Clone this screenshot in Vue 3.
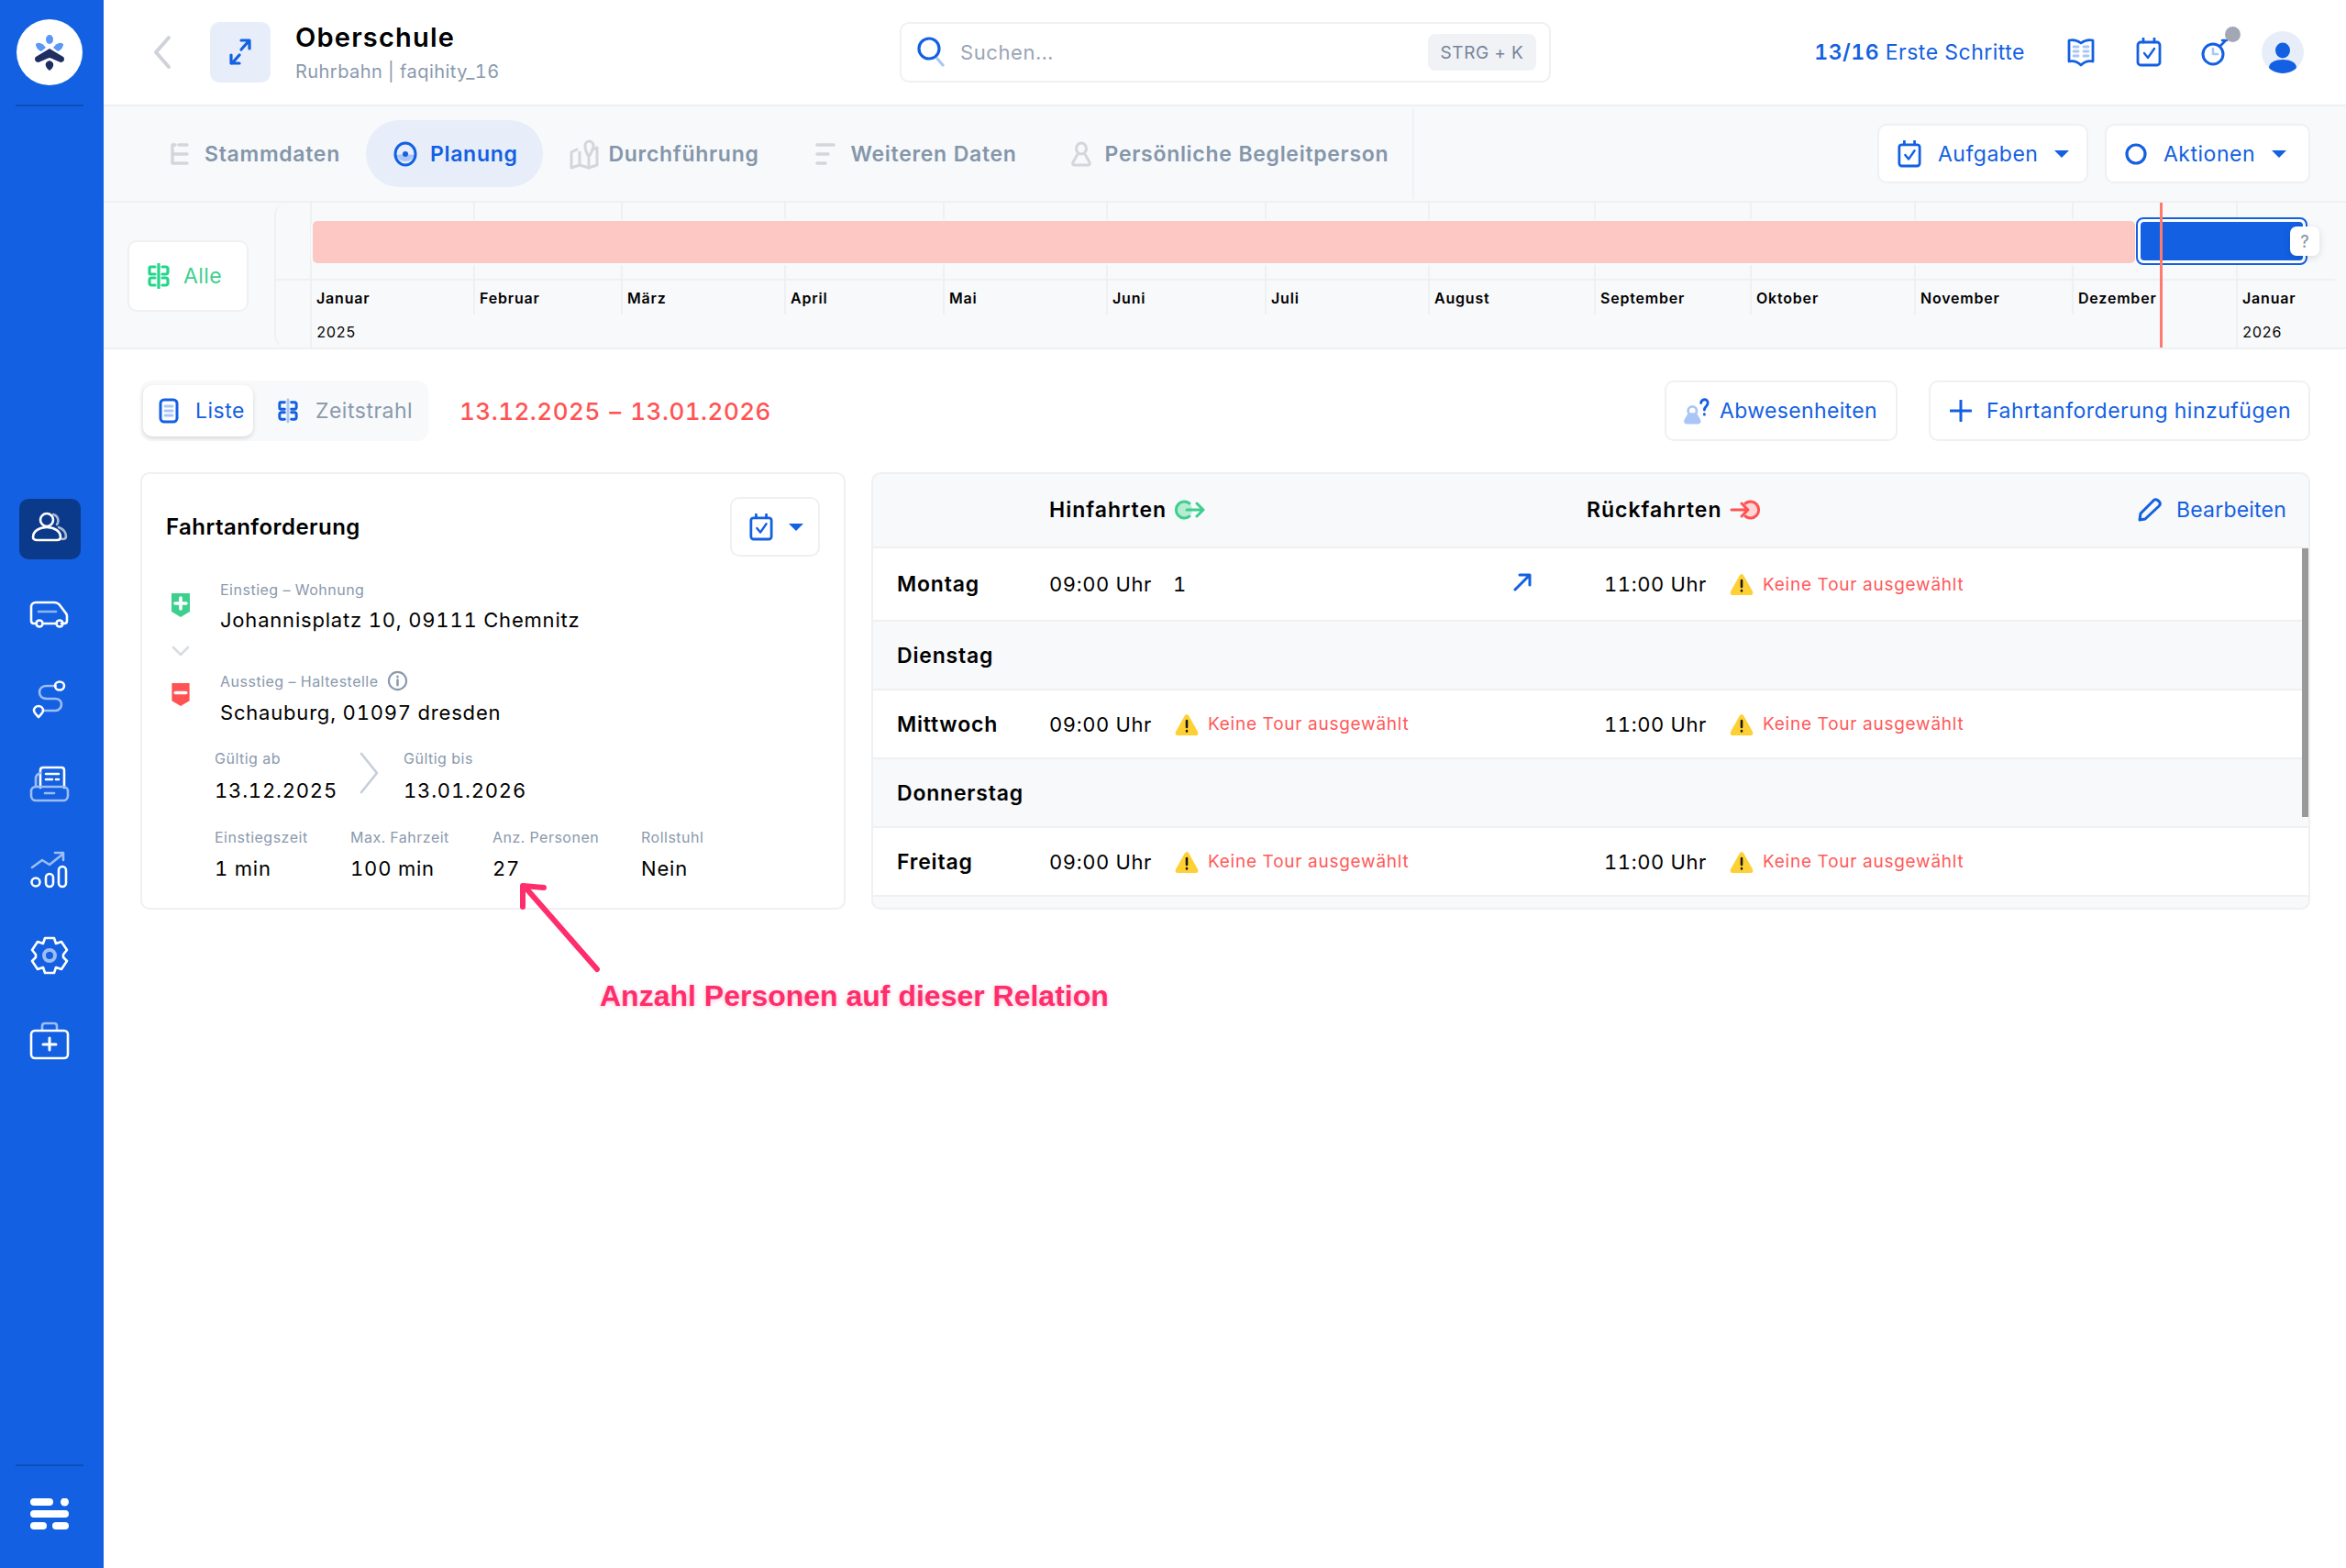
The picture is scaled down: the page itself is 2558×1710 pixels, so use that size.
<template>
  <div class="page">
    <aside class="sidebar">
      <div class="logo">
        <svg width="42" height="42" viewBox="0 0 42 42">
          <ellipse cx="21" cy="7" rx="4" ry="5" fill="#5b97f6" />
          <path d="M6 12 C10 9 14 12 17 16 L12 20 C9 19 6 16 6 12Z" fill="#5b97f6" />
          <path d="M36 12 C32 9 28 12 25 16 L30 20 C33 19 36 16 36 12Z" fill="#5b97f6" />
          <path d="M21 17 L36 26 C38 28 37 32 33 32 C28 30 25 28 21 27 C17 28 14 30 9 32 C5 32 4 28 6 26Z" fill="#1f2d63" />
          <path d="M21 30 C24 31 26 33 25 36 C24 39 22 40 21 41 C20 40 18 39 17 36 C16 33 18 31 21 30Z" fill="#1f2d63" />
        </svg>
      </div>
      <div class="side-line"></div>

      <nav class="side-nav">
        <a class="side-item active">
          <svg width="46" height="46" viewBox="0 0 46 46" fill="none" stroke-width="2.6" stroke-linecap="round" stroke-linejoin="round">
            <path d="M27 7 a7 7 0 0 1 4 11 M33 21 c5 2 8 6 8 10 c0 2 -2 3 -4 3" stroke="#a9b9d6" />
            <circle cx="20" cy="13" r="7" stroke="#fff" />
            <path d="M5 32 c0 -7 7 -11 15 -11 s15 4 15 11 c0 2 -2 3 -4 3 H9 c-2 0 -4 -1 -4 -3Z" stroke="#fff" />
          </svg>
        </a>
        <a class="side-item">
          <svg width="46" height="46" viewBox="0 0 46 46" fill="none" stroke-width="2.6" stroke-linecap="round" stroke-linejoin="round">
            <path d="M9 33 H6 c-2 0 -3 -1 -3 -3 V15 c0 -3 2 -5 5 -5 h20 c3 0 5 1 7 4 l6 8 c1 1 1 2 1 3 v5 c0 2 -1 3 -3 3 h-3 M16 33 H30" stroke="#fff" />
            <circle cx="12" cy="33" r="3.5" stroke="#fff" />
            <circle cx="34" cy="33" r="3.5" stroke="#fff" />
            <path d="M11 20 H30" stroke="#8fb4f2" />
          </svg>
        </a>
        <a class="side-item">
          <svg width="46" height="46" viewBox="0 0 46 46" fill="none" stroke-width="2.6" stroke-linecap="round" stroke-linejoin="round">
            <path d="M30 8 H20 c-5 0 -8 3 -8 7 s3 7 8 7 h9 c5 0 7 3 7 6 s-2 7 -7 7 H17" stroke="#9dbdf4" />
            <ellipse cx="34" cy="8" rx="5" ry="4.5" stroke="#fff" />
            <path d="M11 42 c-3 -3 -5 -5 -5 -7 a5 5 0 0 1 10 0 c0 2 -2 4 -5 7Z" stroke="#fff" />
          </svg>
        </a>
        <a class="side-item">
          <svg width="46" height="46" viewBox="0 0 46 46" fill="none" stroke-width="2.6" stroke-linecap="round" stroke-linejoin="round">
            <path d="M13 26 V7 c0 -2 1 -3 3 -3 h20 c2 0 3 1 3 3 V26" stroke="#fff" />
            <path d="M19 11 H33 M19 17 H26 M30 17 H33" stroke="#fff" />
            <path d="M13 10 c-3 1 -5 3 -5 6 V24" stroke="#9dbdf4" />
            <rect x="3" y="25" width="40" height="15" rx="5" stroke="#9dbdf4" />
            <path d="M18 32 H28" stroke="#9dbdf4" />
          </svg>
        </a>
        <a class="side-item">
          <svg width="46" height="46" viewBox="0 0 46 46" fill="none" stroke-width="2.6" stroke-linecap="round" stroke-linejoin="round">
            <path d="M4 20 L15 12 L23 17 L38 5 M29 4 H38 V12" stroke="#9dbdf4" />
            <circle cx="8" cy="36" r="4.5" stroke="#fff" />
            <rect x="19" y="27" width="8" height="14" rx="4" stroke="#fff" />
            <rect x="33" y="19" width="8" height="22" rx="4" stroke="#fff" />
          </svg>
        </a>
        <a class="side-item">
          <svg width="46" height="46" viewBox="0 0 46 46" fill="none" stroke-width="2.6" stroke-linecap="round" stroke-linejoin="round">
            <path d="M18 4 H28 L30 10 L36 8 L42 17 L38 22 V25 L42 29 L36 38 L30 36 L28 42 H18 L16 36 L10 38 L4 29 L8 25 V22 L4 17 L10 8 L16 10Z" stroke="#fff" />
            <circle cx="23" cy="23" r="6" stroke="#9dbdf4" stroke-width="4" />
          </svg>
        </a>
        <a class="side-item">
          <svg width="46" height="46" viewBox="0 0 46 46" fill="none" stroke-width="2.6" stroke-linecap="round" stroke-linejoin="round">
            <path d="M15 12 V7 c0 -2 1 -3 3 -3 h10 c2 0 3 1 3 3 v5" stroke="#9dbdf4" />
            <rect x="3" y="12" width="40" height="30" rx="4" stroke="#fff" />
            <path d="M23 20 V33 M16 27 H30" stroke="#fff" stroke-width="3" />
          </svg>
        </a>
      </nav>

      <div class="side-bottom">
        <div class="side-line"></div>
        <svg class="menu-icon" width="42" height="34" viewBox="0 0 42 34" fill="#fff">
          <rect x="0" y="0" width="25" height="8" rx="4" />
          <circle cx="37.5" cy="4" r="4.5" />
          <rect x="0" y="13" width="42" height="8" rx="4" />
          <rect x="0" y="26" width="18" height="8" rx="4" />
          <rect x="24" y="26" width="18" height="8" rx="4" />
        </svg>
      </div>
    </aside>

    <div class="main">
      <header class="topbar">
        <svg class="back" width="20" height="38" viewBox="0 0 20 38" fill="none" stroke="#cfd3d9" stroke-width="4" stroke-linecap="round" stroke-linejoin="round">
          <path d="M17 3 L3 19 L17 35" />
        </svg>
        <div class="expand">
          <svg width="24" height="30" viewBox="0 0 24 30" fill="none" stroke="#1360e2" stroke-width="3.2" stroke-linecap="round" stroke-linejoin="round">
            <path d="M13 12 L21 3 M13 2 H22 V11" />
            <path d="M11 18 L3 27 M2 18 V27 H11" />
          </svg>
        </div>
        <div class="title-block">
          <div class="title">Oberschule</div>
          <div class="subtitle">Ruhrbahn | faqihity_16</div>
        </div>

        <div class="search">
          <svg width="30" height="34" viewBox="0 0 30 34" fill="none" stroke-width="3.2" stroke-linecap="round">
            <circle cx="13" cy="13" r="11" stroke="#1360e2" />
            <path d="M22 24 L28 31" stroke="#a9c6f6" />
          </svg>
          <span class="search-text">Suchen...</span>
          <span class="kbd">STRG + K</span>
        </div>

        <div class="top-right">
          <span class="steps"><b>13/16</b> Erste Schritte</span>
          <svg width="30" height="32" viewBox="0 0 30 32" fill="none" stroke-linecap="round" stroke-linejoin="round">
            <path d="M2 3 C7 2 11 3 15 6 C19 3 23 2 28 3 V26 C23 25 19 26 15 30 C11 26 7 25 2 26Z" stroke="#1360e2" stroke-width="2.8" />
            <path d="M7 10 H12 M18 10 H23 M7 15 H12 M18 15 H23 M7 20 H12 M18 20 H23" stroke="#a9c6f6" stroke-width="2.8" />
          </svg>
          <svg width="28" height="32" viewBox="0 0 28 32" fill="none" stroke="#1360e2" stroke-width="2.8" stroke-linecap="round" stroke-linejoin="round">
            <rect x="2" y="5" width="24" height="25" rx="3" />
            <path d="M8 1 V5 M20 1 V5" />
            <path d="M9 17 L13 22 L20 12" stroke-width="2.4" />
          </svg>
          <div class="timer">
            <svg width="30" height="32" viewBox="0 0 30 32" fill="none" stroke-linecap="round" stroke-linejoin="round">
              <circle cx="13" cy="18" r="11" stroke="#1360e2" stroke-width="3" />
              <path d="M13 12 V18 H18" stroke="#a9c6f6" stroke-width="2.6" />
              <path d="M21 9 L26 4 M23 3 H28" stroke="#1360e2" stroke-width="2.6" />
            </svg>
            <span class="timer-dot"></span>
          </div>
          <div class="avatar">
            <svg width="30" height="34" viewBox="0 0 30 34" fill="#1360e2">
              <ellipse cx="15" cy="9" rx="8" ry="8.5" />
              <path d="M0 28 C0 22 7 19 15 19 S30 22 30 28 C28 32 22 34 15 34 S2 32 0 28Z" />
            </svg>
          </div>
        </div>
      </header>

      <div class="tabbar">
        <div class="tabs">
          <a class="tab first">
            <svg class="wide-gap" width="20" height="26" viewBox="0 0 20 26" fill="none" stroke="#d3d6da" stroke-width="3.4" stroke-linecap="round">
              <path d="M2 3 H5 M9 3 H18 M2 13 H18 M2 23 H18 M2 3 V23" />
            </svg>
            Stammdaten
          </a>
          <a class="tab active">
            <svg width="26" height="28" viewBox="0 0 26 28" fill="none">
              <path d="M3 15 L13 14 L23 15 A11 12 0 0 1 3 15Z" fill="#a9c6f6" />
              <ellipse cx="13" cy="14" rx="11" ry="12" stroke="#1360e2" stroke-width="3" />
              <circle cx="13" cy="14" r="3" fill="#1360e2" />
            </svg>
            Planung
          </a>
          <a class="tab tight">
            <svg width="32" height="34" viewBox="0 0 32 34" fill="none" stroke="#d3d6da" stroke-width="3" stroke-linecap="round" stroke-linejoin="round">
              <path d="M8 12 L2 15 V32 L11 29 L21 32 L30 29 V10 L25 12" />
              <path d="M11 15 V29 M21 22 V32" />
              <path d="M21 20 C18 15 17 12 17 8 A4.5 5 0 0 1 26 8 C26 12 24 15 21 20Z" />
            </svg>
            Durchführung
          </a>
          <a class="tab">
            <svg class="wide-gap" width="22" height="26" viewBox="0 0 22 26" fill="none" stroke="#d3d6da" stroke-width="3.6" stroke-linecap="round">
              <path d="M2 3 H20 M2 13 H14 M2 23 H11" />
            </svg>
            Weiteren Daten
          </a>
          <a class="tab last">
            <svg width="24" height="28" viewBox="0 0 24 28" fill="none" stroke="#d3d6da" stroke-width="3" stroke-linejoin="round">
              <ellipse cx="12" cy="8" rx="5.5" ry="6" />
              <path d="M8 14 L3 23 C2 25 3 26 5 26 H19 C21 26 22 25 21 23 L16 14" />
            </svg>
            Persönliche Begleitperson
          </a>
        </div>
        <div class="tab-actions">
          <button class="btn action">
            <svg width="26" height="30" viewBox="0 0 28 32" fill="none" stroke="#1360e2" stroke-width="3" stroke-linecap="round" stroke-linejoin="round">
              <rect x="2" y="5" width="24" height="25" rx="3" />
              <path d="M8 1 V5 M20 1 V5" />
              <path d="M9 17 L13 22 L20 12" stroke-width="2.6" />
            </svg>
            <span>Aufgaben</span>
            <i class="caret"></i>
          </button>
          <button class="btn action">
            <svg class="ring" width="24" height="24" viewBox="0 0 24 24" fill="none" stroke="#1360e2" stroke-width="3.2">
              <circle cx="12" cy="12" r="10" />
            </svg>
            <span>Aktionen</span>
            <i class="caret"></i>
          </button>
        </div>
      </div>

      <section class="timeline">
        <div class="tl-left">
          <button class="alle">
            <svg width="24" height="28" viewBox="0 0 24 28" fill="none" stroke="#22d68a" stroke-width="3.2" stroke-linecap="round" stroke-linejoin="round">
              <path d="M12 1 V27" />
              <path d="M8 4 H3 C2 4 2 5 2 6 V11 C2 12 3 12 4 12 H8 M8 16 H4 C3 16 2 17 2 18 V22 C2 23 3 24 4 24 H8" />
              <path d="M16 4 H20 C21 4 22 5 22 6 V10 C22 11 21 12 20 12 H16 M16 16 H20 C21 16 22 17 22 18 V22 C22 23 21 24 20 24 H16" />
            </svg>
            Alle
          </button>
        </div>
        <div class="tl-track">
          <div class="tl-col lead">
            <div class="tl-top"></div>
          </div>
          <div
            v-for="month in months"
            :key="month.label + month.year"
            class="tl-col"
            :class="{ 'has-year': month.year }"
            :style="{ width: month.width + 'px' }"
          >
            <div class="tl-top"></div>
            <div class="tl-month">{{ month.label }}</div>
            <div class="tl-year">{{ month.year }}</div>
          </div>

          <div class="bar-pink"></div>
          <div class="bar-blue"><span></span></div>
          <div class="bar-help">?</div>
          <div class="today"></div>
        </div>
      </section>

      <main class="content">
        <div class="toolbar">
          <div class="view-switch">
            <a class="view on">
              <svg width="22" height="28" viewBox="0 0 22 28" fill="none" stroke-linecap="round">
                <rect x="2" y="2" width="18" height="24" rx="4" stroke="#1360e2" stroke-width="3" />
                <path d="M7 9 H15 M7 14 H15 M7 19 H15" stroke="#a9c6f6" stroke-width="3" />
              </svg>
              Liste
            </a>
            <a class="view">
              <svg width="22" height="28" viewBox="0 0 24 28" fill="none" stroke="#1360e2" stroke-width="3.2" stroke-linecap="round" stroke-linejoin="round">
                <path d="M12 1 V27" stroke="#a9c6f6" />
                <path d="M8 4 H3 C2 4 2 5 2 6 V11 C2 12 3 12 4 12 H8 M8 16 H4 C3 16 2 17 2 18 V22 C2 23 3 24 4 24 H8" />
                <path d="M16 4 H20 C21 4 22 5 22 6 V10 C22 11 21 12 20 12 H16 M16 16 H20 C21 16 22 17 22 18 V22 C22 23 21 24 20 24 H16" />
              </svg>
              Zeitstrahl
            </a>
          </div>
          <div class="date-range">13.12.2025 – 13.01.2026</div>
          <div class="toolbar-right">
            <button class="btn abw">
              <svg width="28" height="32" viewBox="0 0 30 32" fill="none" stroke-linecap="round" stroke-linejoin="round">
                <ellipse cx="10" cy="16" rx="5" ry="5" stroke="#a9c6f6" stroke-width="3" />
                <path d="M6 20 L2 27 C1 29 2 30 4 30 H16 C18 30 19 29 18 27 L14 20Z" fill="#a9c6f6" stroke="#a9c6f6" stroke-width="3" />
                <path d="M20 7 C20 2 28 1 28 7 C28 11 24 11 24 15 M24 20 V20.5" stroke="#1360e2" stroke-width="3" />
              </svg>
              Abwesenheiten
            </button>
            <button class="btn add">
              <svg width="24" height="24" viewBox="0 0 24 24" fill="none" stroke="#1360e2" stroke-width="3" stroke-linecap="round">
                <path d="M12 1 V23 M1 12 H23" />
              </svg>
              Fahrtanforderung hinzufügen
            </button>
          </div>
        </div>

        <div class="cards">
          <article class="request">
            <div class="request-head">
              <h2>Fahrtanforderung</h2>
              <button class="btn task">
                <svg width="26" height="30" viewBox="0 0 28 32" fill="none" stroke="#1360e2" stroke-width="3" stroke-linecap="round" stroke-linejoin="round">
                  <rect x="2" y="5" width="24" height="25" rx="3" />
                  <path d="M8 1 V5 M20 1 V5" />
                  <path d="M9 17 L13 22 L20 12" stroke-width="2.6" />
                </svg>
                <i class="caret"></i>
              </button>
            </div>

            <div class="stop">
              <div class="stop-mark">
                <svg width="20" height="26" viewBox="0 0 20 26" fill="#3ecf8e">
                  <path d="M0 0 H20 V20 L10 26 L0 20Z" />
                  <path d="M10 5 V17 M4 11 H16" stroke="#fff" stroke-width="3.6" stroke-linecap="round" />
                </svg>
                <svg class="stop-arrow" width="20" height="12" viewBox="0 0 20 12" fill="none" stroke="#d9dce0" stroke-width="2.6" stroke-linecap="round" stroke-linejoin="round">
                  <path d="M2 2 L10 10 L18 2" />
                </svg>
              </div>
              <div>
                <div class="label">Einstieg – Wohnung</div>
                <div class="value">Johannisplatz 10, 09111 Chemnitz</div>
              </div>
            </div>
            <div class="stop last">
              <div class="stop-mark">
                <svg width="20" height="25" viewBox="0 0 20 26" fill="#ff5353">
                  <path d="M0 0 H20 V20 L10 26 L0 20Z" />
                  <path d="M4 11 H16" stroke="#fff" stroke-width="3.6" stroke-linecap="round" />
                </svg>
              </div>
              <div>
                <div class="label">
                  Ausstieg – Haltestelle
                  <svg class="info" width="24" height="24" viewBox="0 0 24 24" fill="none" stroke="#8a99ad" stroke-width="2.2" stroke-linecap="round">
                    <circle cx="12" cy="12" r="10" />
                    <path d="M12 11 V17 M12 7 V7.5" stroke-width="2.6" />
                  </svg>
                </div>
                <div class="value">Schauburg, 01097 dresden</div>
              </div>
            </div>

            <div class="validity">
              <div class="valid-from">
                <div class="label">Gültig ab</div>
                <div class="value">13.12.2025</div>
              </div>
              <svg width="21" height="46" viewBox="0 0 21 46" fill="none" stroke="#c6ced8" stroke-width="2.6" stroke-linecap="round" stroke-linejoin="round">
                <path d="M2 2 L19 23 L2 44" />
              </svg>
              <div>
                <div class="label">Gültig bis</div>
                <div class="value">13.01.2026</div>
              </div>
            </div>

            <div class="facts">
              <div v-for="fact in facts" :key="fact.label">
                <div class="label">{{ fact.label }}</div>
                <div class="value">{{ fact.value }}</div>
              </div>
            </div>
          </article>

          <article class="schedule">
            <div class="sched-head">
              <div class="cell-day"></div>
              <div class="cell-out head-title">
                Hinfahrten
                <svg width="34" height="22" viewBox="0 0 34 22" fill="none" stroke-linecap="round" stroke-linejoin="round">
                  <circle cx="11" cy="11" r="9" fill="#b5ecd2" />
                  <path d="M17 4 A9 9 0 1 0 17 18" stroke="#3ecf8e" stroke-width="3" />
                  <path d="M14 11 H32 M25 4 L32 11 L25 18" stroke="#3ecf8e" stroke-width="3" />
                </svg>
              </div>
              <div class="cell-back head-title">
                Rückfahrten
                <svg width="34" height="22" viewBox="0 0 34 22" fill="none" stroke-linecap="round" stroke-linejoin="round">
                  <circle cx="23" cy="11" r="9" fill="#ffd5d5" />
                  <path d="M17 4 A9 9 0 1 1 17 18" stroke="#ff5353" stroke-width="3" />
                  <path d="M2 11 H20 M13 4 L20 11 L13 18" stroke="#ff5353" stroke-width="3" />
                </svg>
              </div>
              <a class="edit">
                <svg width="26" height="26" viewBox="0 0 26 26" fill="none" stroke="#1360e2" stroke-width="3" stroke-linecap="round" stroke-linejoin="round">
                  <path d="M2 24 L3 17 L18 2 C20 1 23 3 24 5 C25 7 24 8 23 9 L8 23Z" />
                </svg>
                Bearbeiten
              </a>
            </div>

            <div class="sched-body">
              <div
                v-for="day in days"
                :key="day.name"
                class="sched-row"
                :class="{ empty: !day.time, tall: day.tour }"
              >
                <div class="cell-day">{{ day.name }}</div>
                <template v-if="day.time">
                  <div class="cell-out">
                    <span class="time">09:00 Uhr</span>
                    <template v-if="day.tour">
                      <span class="tour-no">1</span>
                      <svg class="open-tour" width="20" height="20" viewBox="0 0 20 20" fill="none" stroke="#1360e2" stroke-width="3" stroke-linecap="round" stroke-linejoin="round">
                        <path d="M2 18 L17 3 M7 2 H18 V13" />
                      </svg>
                    </template>
                    <span v-else class="warn">
                      <svg width="26" height="24" viewBox="0 0 26 24">
                        <path d="M13 1 C14 1 15 2 15.5 3 L25 20 C26 22 25 24 23 24 H3 C1 24 0 22 1 20 L10.5 3 C11 2 12 1 13 1Z" fill="#ffd033" />
                        <path d="M13 8 V15 M13 19 V19.5" stroke="#1a1a1a" stroke-width="2.6" stroke-linecap="round" />
                      </svg>
                      Keine Tour ausgewählt
                    </span>
                  </div>
                  <div class="cell-back">
                    <span class="time">11:00 Uhr</span>
                    <span class="warn">
                      <svg width="26" height="24" viewBox="0 0 26 24">
                        <path d="M13 1 C14 1 15 2 15.5 3 L25 20 C26 22 25 24 23 24 H3 C1 24 0 22 1 20 L10.5 3 C11 2 12 1 13 1Z" fill="#ffd033" />
                        <path d="M13 8 V15 M13 19 V19.5" stroke="#1a1a1a" stroke-width="2.6" stroke-linecap="round" />
                      </svg>
                      Keine Tour ausgewählt
                    </span>
                  </div>
                </template>
              </div>
              <div class="scrollbar"></div>
            </div>
          </article>
        </div>
      </main>

      <div class="note">
        <svg class="note-arrow" width="100" height="108" viewBox="0 0 100 108" fill="none" stroke="#ff2d6b" stroke-width="6" stroke-linecap="round" stroke-linejoin="round">
          <path d="M90 102 L12 13" />
          <path d="M9 34 L9 11 L32 13" />
        </svg>
        <span class="note-text">Anzahl Personen auf dieser Relation</span>
      </div>
    </div>
  </div>
</template>

<script setup>
const monthWidths = [178, 161, 178, 173, 178, 173, 178, 181, 170, 179, 172, 179, 108]
const monthNames = [
  'Januar', 'Februar', 'März', 'April', 'Mai', 'Juni', 'Juli',
  'August', 'September', 'Oktober', 'November', 'Dezember', 'Januar',
]

const months = monthNames.map((label, i) => ({
  label,
  width: monthWidths[i],
  year: i === 0 ? '2025' : i === 12 ? '2026' : '',
}))

const facts = [
  { label: 'Einstiegszeit', value: '1 min' },
  { label: 'Max. Fahrzeit', value: '100 min' },
  { label: 'Anz. Personen', value: '27' },
  { label: 'Rollstuhl', value: 'Nein' },
]

const days = [
  { name: 'Montag', time: true, tour: true },
  { name: 'Dienstag', time: false },
  { name: 'Mittwoch', time: true },
  { name: 'Donnerstag', time: false },
  { name: 'Freitag', time: true },
]
</script>

<style>
html,
body {
  margin: 0;
  background: #fff;
}
</style>

<style scoped>
* {
  box-sizing: border-box;
}

.page {
  display: flex;
  min-height: 1710px;
  font-family: Inter, "Liberation Sans", sans-serif;
  font-variant-numeric: tabular-nums;
  color: #000;
}

svg {
  flex: none;
  display: block;
}

button {
  font-family: inherit;
  font-variant-numeric: inherit;
}

/* sidebar */
.sidebar {
  width: 113px;
  flex: none;
  background: #1360e2;
  display: flex;
  flex-direction: column;
  align-items: center;
  padding: 21px 5px 0 0;
}

.logo {
  width: 72px;
  height: 72px;
  border-radius: 50%;
  background: #fff;
  display: flex;
  align-items: center;
  justify-content: center;
}

.side-line {
  width: 74px;
  height: 2px;
  background: #0f4eb8;
  margin-top: 21px;
}

.side-nav {
  margin-top: 428px;
  display: flex;
  flex-direction: column;
  gap: 27px;
}

.side-item {
  width: 67px;
  height: 66px;
  border-radius: 10px;
  display: flex;
  align-items: center;
  justify-content: center;
}

.side-item.active {
  background: #0c3a8a;
}

.side-bottom {
  margin-top: auto;
  display: flex;
  flex-direction: column;
  align-items: center;
  padding-bottom: 42px;
}

.menu-icon {
  margin-top: 35px;
}

/* header */
.main {
  flex: 1;
  min-width: 0;
  position: relative;
}

.topbar {
  height: 116px;
  border-bottom: 2px solid #eff0f2;
  display: flex;
  align-items: center;
  padding: 0 46px 0 54px;
}

.back {
  margin-right: 42px;
}

.expand {
  width: 66px;
  height: 66px;
  border-radius: 10px;
  background: #e7eefa;
  display: flex;
  align-items: center;
  justify-content: center;
}

.title-block {
  margin-left: 27px;
  width: 659px;
}

.title {
  font-size: 29px;
  font-weight: 600;
  line-height: 36px;
  letter-spacing: 1.2px;
}

.subtitle {
  font-size: 20px;
  line-height: 26px;
  margin-top: 6px;
  color: #8a99ad;
  letter-spacing: 0.45px;
}

.search {
  width: 710px;
  height: 66px;
  border: 2px solid #eff0f2;
  border-radius: 10px;
  display: flex;
  align-items: center;
  padding: 0 14px 0 17px;
}

.search-text {
  margin-left: 17px;
  font-size: 22px;
  color: #9aa5b5;
  letter-spacing: 0.6px;
}

.kbd {
  margin-left: auto;
  width: 118px;
  height: 40px;
  border-radius: 8px;
  background: #f0f2f5;
  display: flex;
  align-items: center;
  justify-content: center;
  font-size: 19px;
  color: #75859b;
  letter-spacing: 0.6px;
}

.top-right {
  margin-left: auto;
  display: flex;
  align-items: center;
}

.steps {
  font-size: 23px;
  color: #1360e2;
  letter-spacing: 0.5px;
  margin-right: 46px;
}

.steps b {
  font-weight: 600;
}

.top-right > svg + svg {
  margin-left: 45px;
}

.timer {
  position: relative;
  margin-left: 43px;
  margin-right: 36px;
}

.timer-dot {
  position: absolute;
  top: -12px;
  left: 26px;
  width: 17px;
  height: 17px;
  border-radius: 50%;
  background: #a2a8b3;
}

.avatar {
  width: 46px;
  height: 46px;
  border-radius: 50%;
  background: #e7eefa;
  display: flex;
  justify-content: center;
  align-items: flex-end;
  overflow: hidden;
}

/* tabs */
.tabbar {
  height: 105px;
  background: #f8f9fb;
  border-bottom: 2px solid #eff0f2;
  display: flex;
  align-items: center;
  padding: 0 39px 0 73px;
}

.tabs {
  display: flex;
  align-items: center;
  height: 98px;
  border-right: 2px solid #f0f1f4;
}

.tab {
  height: 73px;
  display: flex;
  align-items: center;
  gap: 14px;
  padding: 0 29px;
  border-radius: 36px;
  font-size: 23px;
  font-weight: 600;
  color: #8496aa;
  letter-spacing: 0.7px;
}

.tab.first {
  padding-left: 0;
  padding-right: 28px;
}

.tab.last {
  padding-right: 26px;
}

.tab.tight {
  gap: 11px;
  padding-right: 32px;
}

.wide-gap {
  margin-right: 3px;
}

.tab.active {
  background: #e7eefa;
  color: #1360e2;
  padding: 0 27px 0 30px;
}

.tab-actions {
  margin-left: auto;
  display: flex;
  gap: 18px;
}

.btn {
  background: #fff;
  border: 2px solid #eff0f2;
  border-radius: 10px;
  display: flex;
  align-items: center;
  color: #1360e2;
  font-size: 23px;
  letter-spacing: 0.5px;
  padding: 0;
}

.btn.action {
  height: 65px;
  padding: 0 24px 0 20px;
  gap: 18px;
}

.btn.action:first-child {
  width: 230px;
}

.btn.action:last-child {
  width: 224px;
}

.caret {
  width: 0;
  height: 0;
  border-left: 8px solid transparent;
  border-right: 8px solid transparent;
  border-top: 8px solid #1360e2;
  margin-left: auto;
}

/* timeline */
.timeline {
  height: 160px;
  background: #f8f9fb;
  border-bottom: 2px solid #eff0f2;
  display: flex;
}

.tl-left {
  width: 186px;
  flex: none;
  padding: 41px 0 0 26px;
}

.alle {
  width: 132px;
  height: 78px;
  background: #fff;
  border: 2px solid #eff0f2;
  border-radius: 10px;
  display: flex;
  align-items: center;
  gap: 15px;
  padding: 0 0 0 20px;
  font-size: 23px;
  color: #3ecf8e;
  letter-spacing: 0.4px;
}

.tl-track {
  position: relative;
  display: flex;
  height: 158px;
  border-left: 2px solid #eff0f2;
  border-radius: 14px 0 0 14px;
}

.tl-col {
  flex: none;
  position: relative;
}

.tl-col.lead {
  width: 37px;
}

.tl-col:not(.lead)::before {
  content: "";
  position: absolute;
  left: 0;
  top: 0;
  width: 2px;
  height: 122px;
  background: #eff0f2;
}

.tl-col.has-year::before {
  height: 158px;
}

.tl-top {
  height: 85px;
  border-bottom: 2px solid #eff0f2;
}

.tl-month {
  height: 38px;
  padding: 8px 0 0 7px;
  font-size: 16px;
  font-weight: 600;
  line-height: 22px;
  letter-spacing: 0.8px;
}

.tl-year {
  padding: 0 0 0 7px;
  font-size: 16px;
  line-height: 36px;
  letter-spacing: 0.4px;
}

.bar-pink {
  position: absolute;
  left: 40px;
  top: 20px;
  width: 1987px;
  height: 46px;
  border-radius: 5px;
  background: #fdc7c4;
  box-shadow: 0 0 0 2px #f8f9fb;
}

.bar-blue {
  position: absolute;
  left: 2028px;
  top: 16px;
  width: 187px;
  height: 52px;
  padding: 3px;
  border: 2px solid #1360e2;
  border-radius: 8px;
  background: #fff;
}

.bar-blue span {
  display: block;
  height: 100%;
  border-radius: 4px;
  background: #1360e2;
}

.bar-help {
  position: absolute;
  left: 2196px;
  top: 26px;
  width: 32px;
  height: 32px;
  border-radius: 7px;
  background: #fff;
  box-shadow: 0 2px 8px rgba(0, 0, 0, 0.12);
  display: flex;
  align-items: center;
  justify-content: center;
  color: #8a99ad;
  font-size: 18px;
  font-weight: 500;
}

.today {
  position: absolute;
  left: 2054px;
  top: 0;
  width: 3px;
  height: 158px;
  background: #ff7a6e;
}

/* content */
.content {
  padding: 34px 39px 0 40px;
}

.toolbar {
  display: flex;
  align-items: center;
  height: 66px;
}

.view-switch {
  width: 314px;
  height: 66px;
  border-radius: 12px;
  background: #f8f9fb;
  padding: 5px 3px;
  display: flex;
}

.view {
  height: 56px;
  border-radius: 10px;
  display: flex;
  align-items: center;
  gap: 19px;
  padding: 0 14px 0 17px;
  font-size: 23px;
  color: #8a99ad;
  letter-spacing: 0.5px;
}

.view.on {
  width: 120px;
  background: #fff;
  color: #1360e2;
  gap: 18px;
  box-shadow: 0 2px 5px rgba(0, 0, 0, 0.14);
}

.view:not(.on) {
  padding-left: 27px;
  gap: 19px;
}

.date-range {
  margin-left: 34px;
  font-size: 26px;
  font-weight: 500;
  color: #ff5353;
  letter-spacing: 0.5px;
  word-spacing: 2px;
}

.toolbar-right {
  margin-left: auto;
  display: flex;
  gap: 34px;
}

.btn.abw,
.btn.add {
  height: 66px;
}

.btn.abw {
  width: 254px;
  padding-left: 19px;
  gap: 11px;
  letter-spacing: 0.35px;
}

.btn.add {
  width: 416px;
  padding-left: 21px;
  gap: 16px;
  letter-spacing: 0.5px;
}

.cards {
  display: flex;
  gap: 28px;
  margin-top: 34px;
}

.request {
  width: 769px;
  height: 477px;
  flex: none;
  border: 2px solid #eff0f2;
  border-radius: 10px;
  background: #fff;
}

.request-head {
  display: flex;
  align-items: center;
  justify-content: space-between;
  padding: 25px 26px 0 26px;
  height: 90px;
}

.request-head h2 {
  margin: 0;
  font-size: 24px;
  font-weight: 600;
  letter-spacing: 0.45px;
}

.btn.task {
  width: 98px;
  height: 65px;
  padding: 0 16px 0 19px;
}

.stop {
  display: flex;
  height: 98px;
  padding-left: 32px;
  margin-top: 26px;
}

.stop.last {
  height: 59px;
  margin-top: 0;
}

.stop-mark {
  width: 53px;
  padding-top: 14px;
}

.stop-arrow {
  margin-top: 31px;
}

.label {
  font-size: 16px;
  line-height: 20px;
  color: #8a99ad;
  letter-spacing: 0.5px;
  display: flex;
  align-items: center;
  gap: 9px;
}

.value {
  font-size: 22px;
  line-height: 30px;
  letter-spacing: 0.8px;
  margin-top: 8px;
}

.info {
  width: 23px;
  height: 23px;
}

.validity {
  display: flex;
  padding-left: 79px;
  margin-top: 27px;
}

.validity .value {
  margin-top: 10px;
}

.valid-from {
  width: 158px;
}

.validity svg {
  margin: 3px 27px 0 0;
}

.facts {
  display: grid;
  grid-template-columns: 148px 155px 162px auto;
  padding-left: 79px;
  margin-top: 26px;
}

.facts .value {
  margin-top: 9px;
}

.schedule {
  flex: 1;
  height: 477px;
  border: 2px solid #eff0f2;
  border-radius: 10px;
  overflow: hidden;
  background: #f8f9fb;
}

.sched-head {
  height: 81px;
  padding-bottom: 2px;
  display: flex;
  align-items: center;
  border-bottom: 2px solid #eff0f2;
}

.cell-day {
  width: 192px;
  flex: none;
  padding-left: 26px;
  font-size: 23px;
  font-weight: 600;
  letter-spacing: 0.8px;
}

.cell-out {
  width: 586px;
  flex: none;
  display: flex;
  align-items: center;
  position: relative;
}

.cell-back {
  display: flex;
  align-items: center;
}

.head-title {
  gap: 8px;
  font-size: 23px;
  font-weight: 600;
  letter-spacing: 1px;
}

.edit {
  margin-left: auto;
  padding-right: 24px;
  display: flex;
  align-items: center;
  gap: 16px;
  color: #1360e2;
  font-size: 23px;
  letter-spacing: 0.2px;
}

.sched-body {
  position: relative;
}

.sched-row {
  height: 75px;
  display: flex;
  align-items: center;
  background: #fff;
  border-bottom: 2px solid #eff0f2;
}

.sched-row.tall {
  height: 80px;
}

.sched-row.empty {
  background: #f8f9fb;
}

.sched-row .cell-back {
  padding-left: 19px;
}

.time {
  font-size: 22px;
  letter-spacing: 0.6px;
  width: 137px;
  flex: none;
}

.tour-no {
  font-size: 22px;
  margin-left: -2px;
}

.open-tour {
  position: absolute;
  right: 60px;
  top: 1px;
}

.warn {
  display: flex;
  align-items: center;
  gap: 10px;
  color: #ff5a5a;
  font-size: 19px;
  letter-spacing: 0.75px;
}

.scrollbar {
  position: absolute;
  right: 0;
  top: 0;
  width: 7px;
  height: 293px;
  background: #999;
}

/* annotation over the page */
.note {
  position: absolute;
  left: 0;
  top: 0;
}

.note-arrow {
  position: absolute;
  left: 448px;
  top: 955px;
}

.note-text {
  position: absolute;
  left: 541px;
  top: 1066px;
  white-space: nowrap;
  font-family: "Liberation Sans", sans-serif;
  font-size: 32px;
  font-weight: 700;
  line-height: 40px;
  color: #ff2d6b;
  text-shadow: 0 1px 4px rgba(255, 45, 107, 0.3), 0 0 2px #fff;
}
</style>
